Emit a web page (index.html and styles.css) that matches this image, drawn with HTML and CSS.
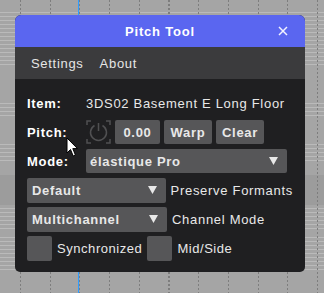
FILE: index.html
```html
<!DOCTYPE html>
<html lang="en">
<head>
  <meta charset="UTF-8" />
  <meta name="viewport" content="width=device-width, initial-scale=1.0"/>
  <title>Pitch Tool</title>
  <link rel="stylesheet" href="styles.css">
</head>
<body>

  <div class="canvas">
    <div class="playhead"></div>

    <div class="window">
      <div class="titlebar">
        <span class="title">Pitch Tool</span>
        <svg class="close" width="10" height="10" viewBox="0 0 10 10">
          <path d="M1 1 L9 9 M9 1 L1 9" stroke="#f2f2ff" stroke-width="1.5" fill="none"/>
        </svg>
      </div>

      <div class="menubar">
        <span>Settings</span>
        <span>About</span>
      </div>

      <div class="content">
        <div class="row">
          <div class="label">Item:</div>
          <div class="value">3DS02 Basement E Long Floor</div>
        </div>

        <div class="row">
          <div class="label">Pitch:</div>
          <div class="controls">
            <svg class="knob" width="25" height="24" viewBox="0 0 25 24">
              <g stroke="#505052" stroke-width="1.5" fill="none">
                <path d="M1 5 V1 H5 M20 1 H24 V5 M24 19 V23 H20 M5 23 H1 V19"/>
                <path d="M8.5 5.5 A8 8 0 1 0 16.5 5.5"/>
                <path d="M12.5 3 V11"/>
              </g>
            </svg>
            <div class="btn btn-value">0.00</div>
            <div class="btn">Warp</div>
            <div class="btn">Clear</div>
          </div>
        </div>

        <div class="row">
          <div class="label">Mode:</div>
          <div class="select select-wide">
            <span>élastique Pro</span>
            <svg width="9" height="8" viewBox="0 0 9 8"><polygon points="0,0 9,0 4.5,8" fill="#e8e8e8"/></svg>
          </div>
        </div>

        <div class="row">
          <div class="select">
            <span>Default</span>
            <svg width="9" height="8" viewBox="0 0 9 8"><polygon points="0,0 9,0 4.5,8" fill="#e8e8e8"/></svg>
          </div>
          <div class="value">Preserve Formants</div>
        </div>

        <div class="row">
          <div class="select">
            <span>Multichannel</span>
            <svg width="9" height="8" viewBox="0 0 9 8"><polygon points="0,0 9,0 4.5,8" fill="#e8e8e8"/></svg>
          </div>
          <div class="value">Channel Mode</div>
        </div>

        <div class="row">
          <div class="check"></div>
          <div class="value tight">Synchronized</div>
          <div class="check"></div>
          <div class="value tight">Mid/Side</div>
        </div>
      </div>
    </div>

    <svg class="cursor" width="13" height="21" viewBox="0 0 13 21">
      <path d="M1 1 L1 16 L4.5 12.5 L7.2 19 L9.4 18 L6.8 11.6 L11.5 11.6 Z" fill="#fff" stroke="#000" stroke-width="1" stroke-linejoin="round"/>
    </svg>
  </div>

</body>
</html>
```

FILE: styles.css
```css
:root {
  --blue: #5a66f0;
  --menu: #3b3b3d;
  --panel: #1f1f21;
  --widget: #565658;
  --text: #e8e8e8;
}

* {
  box-sizing: border-box;
  margin: 0;
  padding: 0;
}

body {
  width: 324px;
  height: 293px;
  overflow: hidden;
  font-family: 'Liberation Sans', Arial, sans-serif;
  font-size: 13px;
  letter-spacing: 0.7px;
  color: var(--text);
}

/* arrange view behind the window */
.canvas {
  position: relative;
  width: 324px;
  height: 293px;
  overflow: hidden;
  padding: 15px 0 0 15px;
  background-color: #a5a5a5;
  background-image:
    repeating-linear-gradient(to bottom, transparent 0 3px, #bababa 3px 4px),
    repeating-linear-gradient(to bottom, transparent 0 3px, #bababa 3px 4px),
    linear-gradient(#9c9c9c, #9c9c9c),
    repeating-linear-gradient(to bottom, transparent 0 3px, #bababa 3px 4px),
    repeating-linear-gradient(to bottom, transparent 0 3px, #bababa 3px 4px),
    repeating-linear-gradient(to bottom, transparent 0 3px, #bababa 3px 4px);
  background-size:
    100% 56px,
    100% 16px,
    100% 30px,
    100% 20px,
    100% 26px,
    100% 38px;
  background-position:
    0 9px,
    0 100px,
    0 175px,
    0 141px,
    0 205px,
    0 234px;
  background-repeat: no-repeat;
}

.canvas::before {
  content: '';
  position: absolute;
  top: 0; bottom: 0;
  left: 20px; right: 0;
  background: repeating-linear-gradient(to right, #7d7d7d 0 1px, transparent 1px 29.7px);
  -webkit-mask-image: repeating-linear-gradient(to bottom, #000 0 2px, transparent 2px 4px);
  mask-image: repeating-linear-gradient(to bottom, #000 0 2px, transparent 2px 4px);
}

.playhead {
  position: absolute;
  top: 0; left: 78px;
  width: 1px;
  height: 100%;
  background: #2f9dff;
}

.window {
  position: relative;
  z-index: 1;
  width: 290px;
  border-radius: 6px 6px 5px 5px;
  overflow: hidden;
  background: var(--panel);
}

.titlebar {
  height: 32px;
  background: var(--blue);
  display: flex;
  align-items: center;
  justify-content: center;
  position: relative;
}

.title {
  font-weight: bold;
  color: #fff;
  letter-spacing: 0.8px;
}

.close {
  position: absolute;
  right: 17px;
  top: 11px;
}

.menubar {
  height: 32px;
  background: var(--menu);
  display: flex;
  align-items: center;
  gap: 16px;
  padding-left: 16px;
  color: #e6e6e6;
}

.content {
  padding: 12px;
  display: flex;
  flex-direction: column;
  gap: 5px;
}

.row {
  height: 24px;
  display: flex;
  align-items: center;
  gap: 5px;
}

.label {
  width: 54px;
  font-weight: bold;
  color: #fff;
}

.value {
  white-space: nowrap;
}

.tight {
  letter-spacing: 0.55px;
}

.controls {
  display: flex;
  align-items: center;
  gap: 4px;
}

.knob {
  display: block;
}

.btn {
  height: 24px;
  width: 48px;
  display: flex;
  align-items: center;
  justify-content: center;
  background: var(--widget);
  border-radius: 2px;
  font-weight: bold;
}

.btn-value {
  width: 45px;
}

.select {
  width: 140px;
  height: 25px;
  display: flex;
  align-items: center;
  justify-content: space-between;
  padding: 0 9px 0 5px;
  background: var(--widget);
  border-radius: 2px;
  font-weight: bold;
}

.select-wide {
  width: 201px;
  height: 24px;
  padding-left: 4px;
}

.check {
  width: 25px;
  height: 25px;
  background: var(--widget);
  border-radius: 2px;
}

.cursor {
  position: absolute;
  top: 137px;
  left: 66px;
  z-index: 2;
}
```
